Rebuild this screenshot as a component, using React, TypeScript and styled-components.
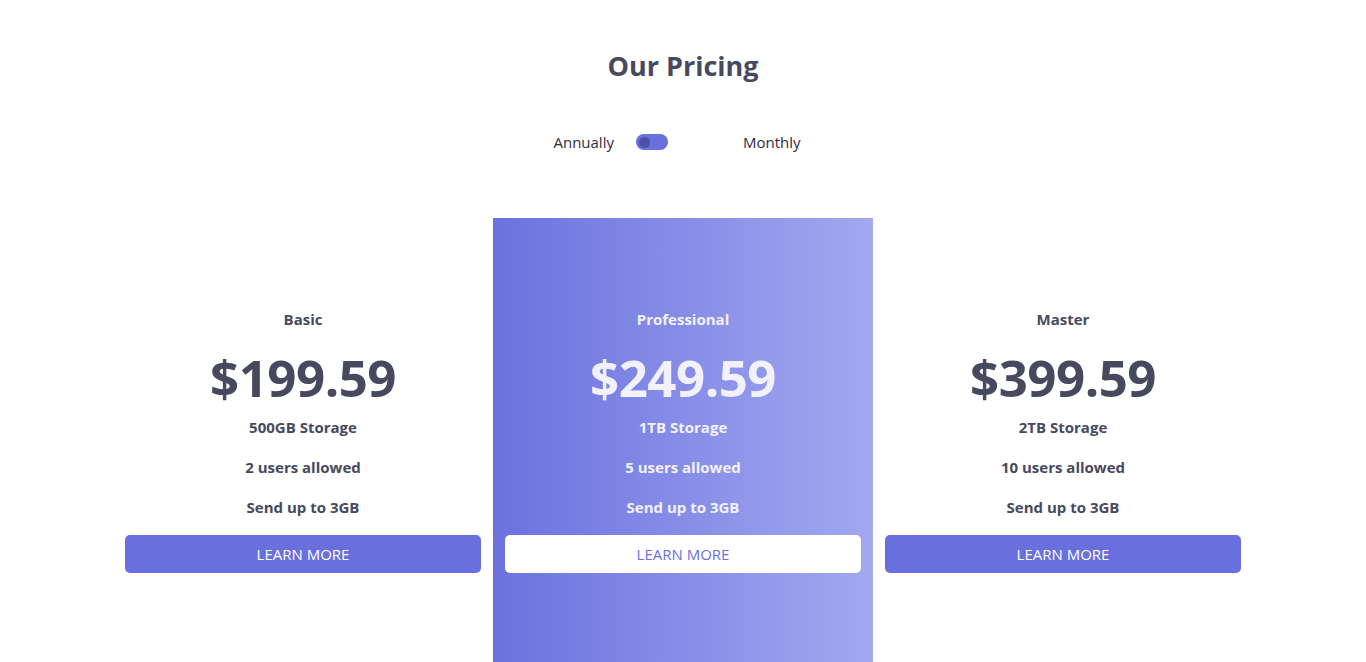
import styled, { createGlobalStyle } from "styled-components";

const GlobalStyle = createGlobalStyle`
  * { box-sizing: border-box; }
  body {
    margin: 0;
    background: #fff;
    font-family: "Open Sans", "Noto Sans", Arial, sans-serif;
    color: #474a5e;
  }
`;

type Plan = {
  name: string;
  price: string;
  storage: string;
  users: string;
  send: string;
  featured?: boolean;
};

const plans: Plan[] = [
  { name: "Basic", price: "$199.59", storage: "500GB Storage", users: "2 users allowed", send: "Send up to 3GB" },
  { name: "Professional", price: "$249.59", storage: "1TB Storage", users: "5 users allowed", send: "Send up to 3GB", featured: true },
  { name: "Master", price: "$399.59", storage: "2TB Storage", users: "10 users allowed", send: "Send up to 3GB" },
];

function App() {
  return (
    <Page>
      <GlobalStyle />
      <Title>Our Pricing</Title>
      <ToggleRow>
        <ToggleLabel>Annually</ToggleLabel>
        <Switch>
          <Knob />
        </Switch>
        <ToggleLabel>Monthly</ToggleLabel>
      </ToggleRow>
      <Cards>
        {plans.map((p) => (
          <Card key={p.name} $featured={p.featured}>
            <PlanName>{p.name}</PlanName>
            <Price>{p.price}</Price>
            <Feature>{p.storage}</Feature>
            <Feature>{p.users}</Feature>
            <Feature>{p.send}</Feature>
            <LearnButton $featured={p.featured}>LEARN MORE</LearnButton>
          </Card>
        ))}
      </Cards>
    </Page>
  );
}

export default App;

const Page = styled.div`
  display: flex;
  flex-direction: column;
  align-items: center;
  padding-top: 46px;
  height: 662px;
  overflow: hidden;
`;

const Title = styled.h1`
  margin: 0;
  font-size: 27px;
  font-weight: 700;
  line-height: 40px;
  color: #474a5e;
`;

const ToggleRow = styled.div`
  display: flex;
  align-items: center;
  margin-top: 46px;
  height: 20px;
  padding-right: 12px;
`;

const ToggleLabel = styled.span`
  font-size: 15px;
  color: #2b2d3a;
  &:first-child {
    margin-right: 22px;
  }
  &:last-child {
    margin-left: 75px;
  }
`;

const Switch = styled.div`
  width: 32px;
  height: 16px;
  border-radius: 8px;
  background: #6a6fde;
  display: flex;
  align-items: center;
  padding: 0 3px;
`;

const Knob = styled.div`
  width: 11px;
  height: 11px;
  border-radius: 50%;
  background: #4c50a6;
`;

const Cards = styled.div`
  display: flex;
  margin-top: 66px;
  width: 1140px;
`;

const Card = styled.div<{ $featured?: boolean }>`
  flex: 1;
  height: 446px;
  display: flex;
  flex-direction: column;
  align-items: center;
  justify-content: center;
  padding: 0 12px;
  background: ${(p) =>
    p.$featured ? "linear-gradient(90deg, #6b72de 0%, #a3a8f0 100%)" : "transparent"};
  color: ${(p) => (p.$featured ? "#f2f2ff" : "#474a5e")};
`;

const PlanName = styled.div`
  font-size: 15px;
  font-weight: 700;
  line-height: 20px;
`;

const Price = styled.div`
  font-size: 51px;
  font-weight: 700;
  line-height: 60px;
  margin-top: 18px;
  letter-spacing: -0.5px;
`;

const Feature = styled.div`
  font-size: 15px;
  font-weight: 700;
  line-height: 20px;
  margin-top: 20px;
  &:nth-of-type(3) {
    margin-top: 10px;
  }
`;

const LearnButton = styled.button<{ $featured?: boolean }>`
  width: 100%;
  height: 38px;
  margin-top: 18px;
  border: none;
  border-radius: 5px;
  font-family: inherit;
  font-size: 15px;
  background: ${(p) => (p.$featured ? "#ffffff" : "#6a6fde")};
  color: ${(p) => (p.$featured ? "#6a6fde" : "#ffffff")};
  cursor: pointer;
`;
